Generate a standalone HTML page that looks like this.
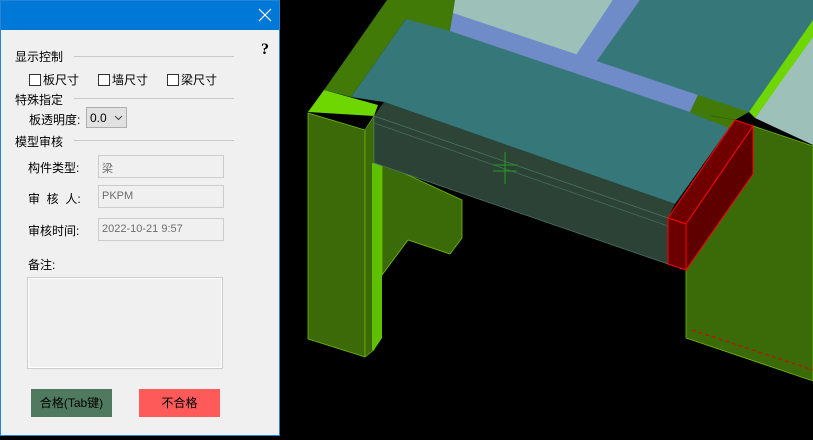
<!DOCTYPE html>
<html><head><meta charset="utf-8"><style>
*{margin:0;padding:0;box-sizing:border-box}
body{width:813px;height:440px;background:#000;position:relative;overflow:hidden;font-family:"Liberation Sans","Noto Sans CJK SC",sans-serif;font-size:12px;color:#000}
#p{position:absolute;left:0;top:0;width:280px;height:436px;background:#f0f0f0;border:1px solid #2a84d6}
#t{position:absolute;left:0;top:0;width:278px;height:29px;background:#0078d7}
.a{position:absolute;white-space:nowrap}
.ln{position:absolute;height:1px;background:#c8c8c8;left:73px;width:160px}
.cb{display:inline-block;width:12px;height:12px;border:1px solid #333;background:#fff;vertical-align:-2px;margin-right:2px}
.f{position:absolute;left:97px;width:126px;height:23px;border:1px solid #ccc;background:#f0f0f0;color:#6d6d6d;padding:4px 3px;font-size:11px}
</style></head><body>
<div id="p">
<div id="t"><svg style="position:absolute;left:257px;top:7px" width="14" height="14"><path d="M1 1L13 13M13 1L1 13" stroke="#fff" stroke-width="1.2"/></svg></div>
<div class="a" style="left:260px;top:40px;font-size:16px;font-weight:bold;font-family:'Liberation Serif',serif">?</div>
<div class="a" style="left:14px;top:47px">显示控制</div><div class="ln" style="top:55px"></div>
<div class="a" style="left:28px;top:70px"><span class="cb"></span>板尺寸</div>
<div class="a" style="left:97px;top:70px"><span class="cb"></span>墙尺寸</div>
<div class="a" style="left:166px;top:70px"><span class="cb"></span>梁尺寸</div>
<div class="a" style="left:14px;top:90px">特殊指定</div><div class="ln" style="top:97px"></div>
<div class="a" style="left:28px;top:110px">板透明度:</div>
<div class="a" style="left:85px;top:106px;width:41px;height:21px;border:1px solid #adadad;background:#e1e1e1;padding:3px 0 0 3px">0.0<svg style="position:absolute;left:27px;top:7px" width="9" height="6"><path d="M1 1L4.5 4.5L8 1" stroke="#444" fill="none"/></svg></div>
<div class="a" style="left:14px;top:132px">模型审核</div><div class="ln" style="top:139px"></div>
<div class="a" style="left:27px;top:158px">构件类型:</div><div class="f" style="top:154px">梁</div>
<div class="a" style="left:27px;top:189px">审&nbsp; 核&nbsp; 人:</div><div class="f" style="top:184px">PKPM</div>
<div class="a" style="left:27px;top:221px">审核时间:</div><div class="f" style="top:217px">2022-10-21 9:57</div>
<div class="a" style="left:27px;top:255px">备注:</div>
<div class="a" style="left:26px;top:276px;width:196px;height:92px;border:1px solid #ccc;box-shadow:inset 0 0 0 1px #fff"></div>
<div class="a" style="left:30px;top:388px;width:81px;height:28px;background:#507a60;text-align:center;line-height:28px">合格(Tab键)</div>
<div class="a" style="left:138px;top:388px;width:81px;height:28px;background:#ff5a5a;text-align:center;line-height:28px">不合格</div>
</div>
<svg style="position:absolute;left:0;top:0" width="813" height="440">
<polygon points="440,0 613,0 576,58 452,36" fill="#9dc1b8"/>
<polygon points="640,0 813,0 813,25 749,112 698,110 585,70" fill="#36787a"/>
<polygon points="755,118 813,35 813,145" fill="#9dc1b8"/>
<polygon points="749,112 813,20 813,37 755,118" fill="#6ed600"/>
<polygon points="406,19 450,25 695,105 729,128 675,204 384,102 351,97" fill="#36787a"/>
<polygon points="613,0 640,0 596,62 576,55" fill="#6f8bc8"/>
<polygon points="453,13 698,95 690,112 450,31" fill="#6f8bc8"/>
<polygon points="324,90 387,0 455,0 453,13 450,31 406,19 351,97" fill="#417a06"/>
<polygon points="698,95 749,112 735,120 690,112" fill="#417a06"/>
<polygon points="688,112 735,120 753,126 729,128" fill="#417a06"/>
<polygon points="382,163 462,200 462,238 450,254 408,240 382,275" fill="#3b6a09" stroke="#6ec000" stroke-width="0.8"/>
<polygon points="324,90 378,105 374,116 308,112" fill="#6ed600"/>
<polygon points="308,113 365,130 365,357 308,339" fill="#3d6a09" stroke="#6ec000" stroke-width="0.8"/>
<polygon points="365,130 374,116 374,350 365,357" fill="#3d6a09" stroke="#6ec000" stroke-width="0.6"/>
<polygon points="372,163 382,165 382,338 374,350 372,350" fill="#5fc000"/>
<polygon points="686,224 753,126 813,146 813,381 686,338" fill="#3b6a09" stroke="#6ec000" stroke-width="0.8"/>
<line x1="692" y1="330" x2="813" y2="370" stroke="#d00" stroke-dasharray="4,3"/>
<polygon points="374,116 384,102 675,204 668,218" fill="#2d4436"/>
<polygon points="374,116 668,218 668,264 374,163" fill="#2d4236" stroke="#4a7a66" stroke-width="0.7"/>
<line x1="374" y1="123" x2="668" y2="226" stroke="#4a7a66" stroke-width="0.6"/>
<polygon points="668,218 735,120 753,126 686,224" fill="#700000" stroke="#f00" stroke-width="1"/>
<polygon points="668,218 686,224 686,270 668,264" fill="#6a0000" stroke="#f00" stroke-width="1"/>
<polygon points="686,224 753,126 753,174 686,270" fill="#5e0000" stroke="#f00" stroke-width="1"/>
<path d="M505,152V184M493,165H517M493,171H517" stroke="#1fa01f" stroke-width="1"/>
</svg>
</body></html>
